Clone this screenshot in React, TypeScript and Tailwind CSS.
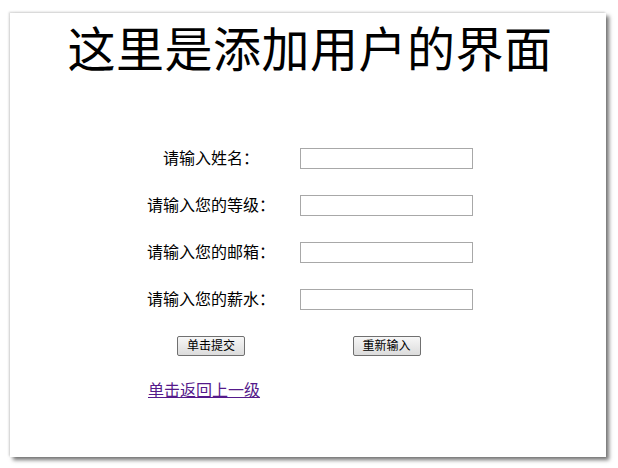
import React from 'react';

const fields = ['请输入姓名：', '请输入您的等级：', '请输入您的邮箱：', '请输入您的薪水：'];

const cjk = { fontFamily: '"Liberation Serif", "Noto Sans CJK SC", serif' };
const cjkSans = { fontFamily: '"Liberation Sans", "Noto Sans CJK SC", sans-serif' };

const App = () => {
  return (
    <div className="w-[618px] h-[468px] bg-white overflow-hidden">
      <div className="pt-[13px] pl-[10px]">
        <div className="w-[596px] h-[444px] bg-white shadow-[3px_3px_4px_rgba(0,0,0,0.55),-1px_-1px_2px_rgba(0,0,0,0.18)]">
          {/* 标题 */}
          <h1
            className="pt-[14px] pl-[4px] text-center text-[48px] leading-[48px] text-black font-normal tracking-[0.5px]"
            style={cjk}
          >
            这里是添加用户的界面
          </h1>

          <div className="mt-[73px] pl-[121px] flex flex-col gap-[26px]" style={cjkSans}>
            {fields.map((label) => (
              <div key={label} className="flex items-center h-[21px]">
                <span className="w-[160px] text-center text-[16px] leading-[21px] text-black">{label}</span>
                <input
                  type="text"
                  className="ml-[9px] w-[173px] h-[21px] border border-[#a8a8a8] bg-white outline-none"
                />
              </div>
            ))}

            <div className="flex items-center h-[20px]">
              <div className="w-[160px] flex justify-center">
                <button className="w-[68px] h-[20px] border border-[#707070] rounded-[2px] bg-gradient-to-b from-[#f7f7f7] to-[#dcdcdc] text-[12px] leading-[18px] text-black">
                  单击提交
                </button>
              </div>
              <div className="ml-[9px] w-[173px] flex justify-center">
                <button className="w-[68px] h-[20px] border border-[#707070] rounded-[2px] bg-gradient-to-b from-[#f7f7f7] to-[#dcdcdc] text-[12px] leading-[18px] text-black">
                  重新输入
                </button>
              </div>
            </div>
          </div>

          <div className="mt-[23px] pl-[138px]" style={cjkSans}>
            <a href="#" className="text-[16px] leading-[20px] text-[#551a8b] underline">
              单击返回上一级
            </a>
          </div>
        </div>
      </div>
    </div>
  );
};

export default App;
